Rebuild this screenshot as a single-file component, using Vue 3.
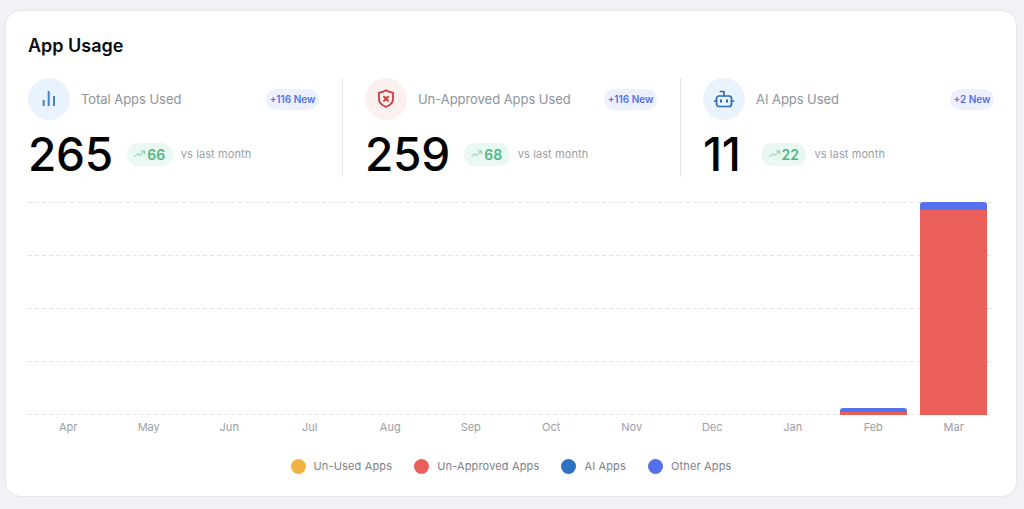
<template>
  <div class="page">
    <div class="card">
      <h2 class="title">App Usage</h2>

      <div class="stats">
        <div v-for="s in stats" :key="s.label" class="stat">
          <div class="stat-top">
            <span class="icon-wrap" :class="s.tone">
              <svg v-if="s.icon === 'bars'" width="20" height="20" viewBox="0 0 20 20" fill="none" stroke="#4a7fc1" stroke-width="2">
                <path d="M4.700 11v6M9.700 2v15M15 7v10" />
              </svg>
              <svg v-else-if="s.icon === 'shield'" width="20" height="20" viewBox="0 0 20 20" fill="none" stroke="#cf3b3b" stroke-width="1.800" stroke-linejoin="round" stroke-linecap="round">
                <path d="M10 1.200c2.100 1.500 4.500 2.300 7 2.400v6.500c0 3.600-2.800 6.300-7 7.800-4.200-1.500-7-4.200-7-7.800V3.600c2.500-.1 4.900-.9 7-2.400z" />
                <path d="M8 7.800l4 4M12 7.800l-4 4" stroke-width="2" />
              </svg>
              <svg v-else width="22" height="22" viewBox="0 0 22 22" fill="none" stroke="#2f69b3" stroke-width="1.700" stroke-linecap="round" stroke-linejoin="round">
                <rect x="3.500" y="8" width="15" height="10.500" rx="2.500" />
                <path d="M11 8V3.500H7.500M1.500 13h2M18.500 13h2" />
                <path d="M8 12.200v1.600M14 12.200v1.600" stroke-width="2" />
              </svg>
            </span>
            <span class="stat-label">{{ s.label }}</span>
            <span class="new-badge">{{ s.badge }}</span>
          </div>
          <div class="stat-bottom">
            <span class="stat-value">{{ s.value }}</span>
            <span class="trend">
              <svg width="12" height="8" viewBox="0 0 12 8" fill="none" stroke="#7cc8a4" stroke-width="1" stroke-linecap="round" stroke-linejoin="round">
                <path d="M.7 6.800l3-3 2 1.700 4.600-4.300M7.600 1h3v2.800" />
              </svg>
              {{ s.trend }}
            </span>
            <span class="vs">vs last month</span>
          </div>
        </div>
      </div>

      <div class="chart">
        <div class="grid-lines">
          <div v-for="n in 5" :key="n" class="grid-line"></div>
        </div>
        <div class="bars">
          <div v-for="m in months" :key="m.name" class="bar-slot">
            <div class="bar">
              <div v-if="m.other" class="seg other" :style="{ height: m.other + 'px' }"></div>
              <div v-if="m.red" class="seg red" :style="{ height: m.red + 'px' }"></div>
            </div>
          </div>
        </div>
      </div>
      <div class="months">
        <span v-for="m in months" :key="m.name">{{ m.name }}</span>
      </div>

      <div class="legend">
        <div v-for="l in legend" :key="l.name" class="legend-item">
          <span class="dot" :style="{ background: l.color }"></span>
          {{ l.name }}
        </div>
      </div>
    </div>
  </div>
</template>

<script setup>
const stats = [
  { label: 'Total Apps Used', badge: '+116 New', value: '265', trend: '66', icon: 'bars', tone: 'blue' },
  { label: 'Un-Approved Apps Used', badge: '+116 New', value: '259', trend: '68', icon: 'shield', tone: 'pink' },
  { label: 'AI Apps Used', badge: '+2 New', value: '11', trend: '22', icon: 'robot', tone: 'blue' }
]

const names = ['Apr', 'May', 'Jun', 'Jul', 'Aug', 'Sep', 'Oct', 'Nov', 'Dec', 'Jan', 'Feb', 'Mar']
const months = names.map((name) => {
  if (name === 'Feb') return { name, other: 4, red: 3 }
  if (name === 'Mar') return { name, other: 8, red: 205 }
  return { name, other: 0, red: 0 }
})

const legend = [
  { name: 'Un-Used Apps', color: '#f2b440' },
  { name: 'Un-Approved Apps', color: '#ea5f5a' },
  { name: 'AI Apps', color: '#2f72c4' },
  { name: 'Other Apps', color: '#5470ea' }
]
</script>

<style>
html,
body {
  margin: 0;
  background: #f1f1f6;
}
</style>

<style scoped>
.page {
  height: 509px;
  box-sizing: border-box;
  padding: 10px 7px 12px 5px;
  font-family: Inter, "Liberation Sans", sans-serif;
  overflow: hidden;
}

.card {
  height: 487px;
  box-sizing: border-box;
  padding: 24px 22px 0 22px;
  background: #fff;
  border: 1px solid #e4e4ea;
  border-radius: 15px;
}

.title {
  margin: 0;
  font-size: 18px;
  line-height: 22px;
  font-weight: 600;
  color: #0b0b0f;
}

.stats {
  display: grid;
  grid-template-columns: 315px 338px 1fr;
  margin-top: 21px;
  height: 98px;
}

.stat {
  box-sizing: border-box;
  padding-right: 23px;
  padding-left: 22px;
  border-right: 1px solid #e5e7eb;
}

.stat:first-child {
  padding-left: 0;
}

.stat:last-child {
  border-right: none;
  padding-right: 0;
}

.stat-top {
  display: flex;
  align-items: center;
  height: 42px;
}

.icon-wrap {
  width: 42px;
  height: 42px;
  flex: none;
  border-radius: 50%;
  display: flex;
  align-items: center;
  justify-content: center;
}

.icon-wrap.blue {
  background: #e8f3fd;
}

.icon-wrap.pink {
  background: #fdf1ef;
}

.stat-label {
  margin-left: 11px;
  font-size: 13px;
  letter-spacing: -0.05px;
  color: #8f939b;
  flex: 1;
}

.new-badge {
  height: 21px;
  line-height: 21px;
  padding: 0 3.5px;
  border-radius: 11px;
  background: #edf0fe;
  color: #5470ea;
  font-size: 10px;
  font-weight: 600;
}

.stat-bottom {
  display: flex;
  align-items: center;
  gap: 14px;
  margin-top: 11px;
}

.stat-value {
  font-size: 46px;
  line-height: 46px;
  font-weight: 500;
  letter-spacing: -0.3px;
  color: #000;
  min-width: 44px;
}

.trend {
  height: 23px;
  box-sizing: border-box;
  padding: 0 7.5px;
  border-radius: 12px;
  background: #e9f9f2;
  color: #4fb585;
  font-size: 14px;
  font-weight: 600;
  display: flex;
  align-items: center;
  gap: 1px;
}

.vs {
  margin-left: -6px;
  font-size: 11px;
  letter-spacing: 0.1px;
  color: #9a9ea6;
}

.chart {
  display: grid;
  margin-top: 26px;
  height: 213px;
}

.grid-lines,
.bars {
  grid-area: 1 / 1;
}

.grid-lines {
  display: flex;
  flex-direction: column;
  justify-content: space-between;
}

.grid-line {
  height: 1px;
  background: repeating-linear-gradient(to right, #e3e5e9 0 4px, transparent 4px 7px);
}

.bars {
  display: grid;
  grid-template-columns: repeat(12, 1fr);
}

.bar-slot {
  display: flex;
  align-items: flex-end;
  justify-content: center;
}

.bar {
  width: 67px;
  border-radius: 3px 3px 0 0;
  overflow: hidden;
}

.seg.other {
  background: #5470ea;
}

.seg.red {
  background: #ea5f5a;
}

.months {
  display: grid;
  grid-template-columns: repeat(12, 1fr);
  margin-top: 4px;
  text-align: center;
  font-size: 11px;
  line-height: 16px;
  color: #9a9ea6;
}

.legend {
  display: flex;
  justify-content: center;
  gap: 22px;
  margin-top: 23px;
}

.legend-item {
  display: flex;
  align-items: center;
  gap: 8px;
  font-size: 11px;
  letter-spacing: 0.15px;
  line-height: 16px;
  color: #7d8087;
}

.dot {
  width: 15px;
  height: 15px;
  border-radius: 50%;
}
</style>
